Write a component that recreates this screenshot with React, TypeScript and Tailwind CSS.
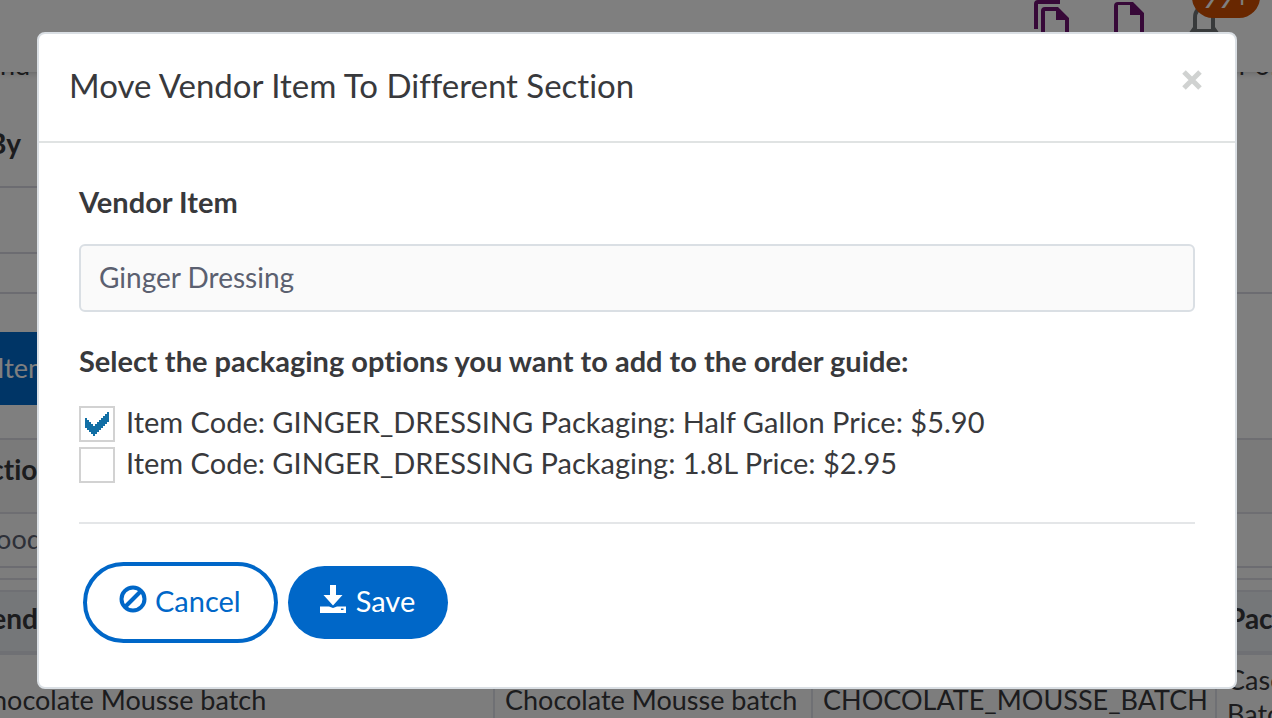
import { useState } from 'react';

const packagingOptions = [
    { id: 'half-gallon', label: 'Item Code: GINGER_DRESSING Packaging: Half Gallon Price: $5.90' },
    { id: 'liter', label: 'Item Code: GINGER_DRESSING Packaging: 1.8L Price: $2.95' },
];

const PageIcon = () => (
    <svg width="30" height="42" viewBox="0 0 30 42" aria-hidden="true">
        <path d="M4 2H19L30 13V38Q30 42 26 42H4Q0 42 0 38V6Q0 2 4 2ZM4 5V38H26V15H16V5Z" fill="#6e1070" fillRule="evenodd" />
    </svg>
);

const PagesIcon = () => (
    <svg width="36" height="46" viewBox="0 0 36 46" aria-hidden="true">
        <path d="M26 0H4Q0 0 0 4V29H4V4H26Z" fill="#6e1070" />
        <path d="M11 7H24L35 18V42Q35 46 31 46H11Q7 46 7 42V11Q7 7 11 7ZM11 11V42H31V20H22V11Z" fill="#6e1070" fillRule="evenodd" />
    </svg>
);

const BellIcon = () => (
    <svg width="32" height="40" viewBox="0 0 32 40" aria-hidden="true">
        <path d="M7 31V18Q7 8 16 8T25 18V31" fill="none" stroke="#707577" strokeWidth="4" />
        <path d="M5 27L0 34H32L27 27V29H5Z" fill="#707577" />
    </svg>
);

const BanIcon = () => (
    <svg className="mb-1" width="28" height="28" viewBox="0 0 28 28" fill="none" stroke="currentColor" strokeWidth="4" aria-hidden="true">
        <circle cx="14" cy="14" r="11.5" />
        <path d="M6 22L22 6" />
    </svg>
);

const SaveIcon = () => (
    <svg className="mb-1" width="26" height="28" viewBox="0 0 26 28" fill="currentColor" aria-hidden="true">
        <path d="M10 0H16V10H22.5L13 20.5L3.5 10H10Z" />
        <path d="M0 21.5H9L13 23L17 21.5H26V28H0ZM21 23.5V25H23.5V23.5Z" fillRule="evenodd" />
    </svg>
);

const CheckMark = () => (
    <svg
        className="pointer-events-none invisible col-start-1 row-start-1 place-self-center peer-checked:visible"
        width="24"
        height="24"
        viewBox="0 0 12 12"
        shapeRendering="crispEdges"
        aria-hidden="true"
    >
        <path
            d="M0 3H1V4H2V5H3V6H4V7H5V6H6V5H7V4H8V3H9V2H10V1H11V0H12V5H11V6H10V7H9V8H8V9H7V10H6V11H5V12H4V11H3V10H2V9H1V8H0Z"
            fill="#126fa5"
        />
    </svg>
);

const OrderGuide = () => (
    <div className="absolute inset-0 overflow-hidden bg-white text-[27px] leading-[34px]">
        <header className="relative flex h-[72px] items-start justify-end bg-white pr-[52px] shadow-md">
            <div className="flex items-start gap-11">
                <PagesIcon />
                <PageIcon />
                <div className="relative">
                    <BellIcon />
                    <span className="absolute -top-6 left-1 flex h-[42px] w-[68px] items-center justify-center rounded-full bg-[#d04e00] text-[28px] text-white">
                        99+
                    </span>
                </div>
            </div>
        </header>

        <div className="-ml-14">
            <div className="-mt-6 flex h-[72px] justify-between">
                <span className="pl-14">nd t</span>
                <span className="-mr-2">r or</span>
            </div>
            <h2 className="h-[66px] pl-11 pt-1.5 text-[28px] font-bold">By</h2>
            <div className="h-[68px] w-24 border-y-2 border-[#d8d9e2]" />
            <div className="h-10 border-b-2 border-[#d8d9e2]" />
            <div className="h-[144px] pt-[38px]">
                <button type="button" className="h-[73px] w-40 bg-[#006acc] pb-0.5 pl-[53px] text-left text-[27px] text-white">
                    Item
                </button>
            </div>
            <h3 className="h-[76px] border-y-2 border-[#dcdce4] bg-[#f4f4f4] pl-4 pt-3 text-[28px] font-bold">Section</h3>
            <p className="h-[54px] border-b-2 border-[#d8d9e2] bg-[#fbfbfb] pl-[38px] pt-2 text-[#5b6070]">Food</p>
            <div className="h-3 border-b-2 border-[#dcdce4] bg-[#fbfbfb]" />
            <div className="h-2.5 bg-[#fbfbfb]" />
            <table className="w-[calc(100%+80px)] table-fixed border-collapse text-left">
                <thead>
                    <tr className="h-[62px] border-b-4 border-t-2 border-[#dfe0e8] bg-[#ebeef3] text-[28px]">
                        <th className="pb-2 pl-[30px]">Vendor Item</th>
                        <th className="w-[318px] pb-2 pl-3">Name</th>
                        <th className="w-[404px] pb-2 pl-3">Item Code</th>
                        <th className="w-[136px] pb-2 pl-3">Packaging</th>
                    </tr>
                </thead>
                <tbody>
                    <tr className="bg-[#fbfbfb] align-top">
                        <td className="border-r-2 border-[#dfe0e8] pl-[30px] pt-7">Chocolate Mousse batch</td>
                        <td className="border-r-2 border-[#dfe0e8] pl-2.5 pt-7">Chocolate Mousse batch</td>
                        <td className="border-r-2 border-[#dfe0e8] pl-2.5 pt-7">CHOCOLATE_MOUSSE_BATCH</td>
                        <td className="pl-2.5 pt-2">Case Batch</td>
                    </tr>
                </tbody>
            </table>
        </div>
    </div>
);

const MoveItemDialog = () => {
    const [selected, setSelected] = useState<string[]>(['half-gallon']);

    const toggle = (id: string) => {
        setSelected((prev) => (prev.includes(id) ? prev.filter((item) => item !== id) : [...prev, id]));
    };

    return (
        <section
            role="dialog"
            aria-modal="true"
            aria-labelledby="dialog-title"
            className="w-full rounded-lg border-2 border-[#dadfe4] bg-white"
        >
            <div className="flex items-start justify-between border-b-2 border-[#e0e3e3] pb-[35px] pl-[30px] pr-[27px] pt-[30px]">
                <h1 id="dialog-title" className="text-[33px] leading-[42px]">
                    Move Vendor Item To Different Section
                </h1>
                <button type="button" aria-label="Close" className="p-1.5 text-[#d0d2d1]">
                    <svg width="20" height="20" viewBox="0 0 20 20" stroke="currentColor" strokeWidth="5" aria-hidden="true">
                        <path d="M2 2L18 18M18 2L2 18" />
                    </svg>
                </button>
            </div>

            <form className="px-10 pb-11 pt-[38px]" onSubmit={(e) => e.preventDefault()}>
                <label htmlFor="vendor-item" className="block text-[29px] font-bold leading-[41px]">
                    Vendor Item
                </label>
                <input
                    id="vendor-item"
                    type="text"
                    readOnly
                    value="Ginger Dressing"
                    className="mt-[22px] block h-[68px] w-full rounded-md border-2 border-[#dadfe4] bg-[#fafafa] px-[18px] pb-0.5 text-[28px] text-[#5b6070] outline-none"
                />

                <fieldset className="mt-7">
                    <legend className="text-[29px] font-bold leading-[41px]">
                        Select the packaging options you want to add to the order guide:
                    </legend>
                    <div className="mt-[22px]">
                        {packagingOptions.map((option) => (
                            <div key={option.id} className="flex h-[41px] items-center gap-[11px]">
                                <span className="grid shrink-0">
                                    <input
                                        id={option.id}
                                        type="checkbox"
                                        checked={selected.includes(option.id)}
                                        onChange={() => toggle(option.id)}
                                        className="peer col-start-1 row-start-1 size-9 appearance-none border-2 border-[#d2d2d2] bg-white"
                                    />
                                    <CheckMark />
                                </span>
                                <label htmlFor={option.id} className="pb-1 text-[29px] leading-[37px]">
                                    {option.label}
                                </label>
                            </div>
                        ))}
                    </div>
                </fieldset>

                <div className="mt-[37px] flex items-center gap-[10px] border-t-2 border-[#e4e6e8] pl-1 pt-[38px]">
                    <button
                        type="button"
                        className="flex h-[81px] items-center gap-2 rounded-full border-4 border-[#0067c8] bg-white pb-1 pl-8 pr-[33px] text-[29px] text-[#0067c8]"
                    >
                        <BanIcon />
                        Cancel
                    </button>
                    <button
                        type="submit"
                        className="flex h-[73px] items-center gap-[10px] rounded-full bg-[#0067c8] pb-1 pl-8 pr-[33px] text-[29px] text-white"
                    >
                        <SaveIcon />
                        Save
                    </button>
                </div>
            </form>
        </section>
    );
};

const App = () => {
    return (
        <main className="relative min-h-screen overflow-hidden font-[Lato,sans-serif] text-[#38393c] [font-variant-ligatures:none]">
            <OrderGuide />
            <div className="relative min-h-screen bg-black/50 pb-7 pl-[37px] pr-[35px] pt-8">
                <MoveItemDialog />
            </div>
        </main>
    );
};

export default App;
